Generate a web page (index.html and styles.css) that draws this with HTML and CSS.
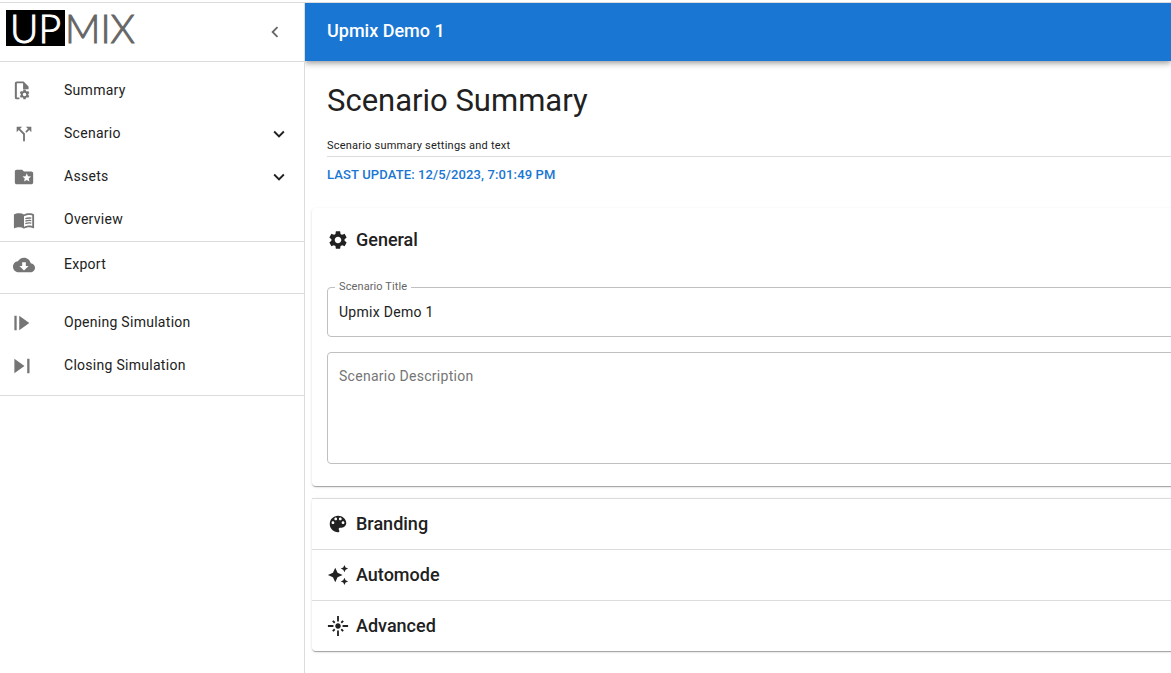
FILE: index.html
```html
<!DOCTYPE html>
<html lang="en">
<head>
<meta charset="utf-8">
<meta name="viewport" content="width=device-width, initial-scale=1">
<title>Upmix Demo 1</title>
<link rel="stylesheet" href="styles.css">
</head>
<body>
<div class="app">
  <aside class="sidebar">
    <div class="brand">
      <a class="logo" href="#" aria-label="Upmix"><span class="logo-up">UP</span><span class="logo-mix">MIX</span></a>
      <button class="collapse" type="button" aria-label="Collapse menu">
        <svg class="icon" viewBox="0 0 24 24"><path d="M15.41 7.41 14 6l-6 6 6 6 1.41-1.41L10.83 12z"/></svg>
      </button>
    </div>
    <nav>
      <div class="group">
        <a class="item" href="#">
          <svg class="icon" viewBox="0 0 24 24"><path d="M4 1.500h7.500l5.500 5.500v3h-6V3.500H4.200v15.500H7v2H4a2 2 0 0 1-2-2V3.500a2 2 0 0 1 2-2z"/><path fill-rule="evenodd" transform="translate(-.6 .8) scale(.88)" d="M13.600 11h2.800l.3 1.700 1.200.7 1.600-.6 1.400 2.400-1.300 1.100v1.400l1.300 1.100-1.400 2.400-1.600-.6-1.200.7-.3 1.700h-2.800l-.3-1.700-1.200-.7-1.600.6-1.400-2.400 1.300-1.100v-1.400l-1.300-1.100 1.400-2.400 1.600.6 1.200-.7zM15 14.800a2.200 2.200 0 1 0 0 4.400 2.200 2.200 0 0 0 0-4.400z"/></svg>
          <span>Summary</span>
        </a>
        <a class="item" href="#">
          <svg class="icon" viewBox="0 0 24 24"><path d="M14 4l2.290 2.290-2.880 2.880 1.420 1.420 2.880-2.880L20 10V4zm-4 0H4v6l2.290-2.290 4.710 4.700V20h2v-8.410l-5.290-5.300z"/></svg>
          <span>Scenario</span>
          <svg class="icon expand" viewBox="0 0 24 24"><path d="M7.410 8.590 12 13.170l4.590-4.580L18 10l-6 6-6-6z"/></svg>
        </a>
        <a class="item" href="#">
          <svg class="icon" viewBox="0 0 24 24"><path d="M20 6h-8l-2-2H4c-1.100 0-2 .9-2 2v12c0 1.100.9 2 2 2h16c1.100 0 2-.9 2-2V8c0-1.100-.9-2-2-2zm-2.060 11L15 15.280 12.060 17l.78-3.330-2.590-2.240 3.410-.29L15 8l1.340 3.140 3.410.29-2.590 2.240z"/></svg>
          <span>Assets</span>
          <svg class="icon expand" viewBox="0 0 24 24"><path d="M7.410 8.590 12 13.170l4.590-4.580L18 10l-6 6-6-6z"/></svg>
        </a>
        <a class="item" href="#">
          <svg class="icon" viewBox="0 0 24 24"><path d="M21 5c-1.110-.35-2.330-.5-3.500-.5-1.950 0-4.050.4-5.500 1.500-1.450-1.100-3.550-1.500-5.500-1.500S2.450 4.900 1 6v14.650c0 .25.25.5.5.5.1 0 .15-.05.25-.05C3.100 20.450 5.050 20 6.500 20c1.950 0 4.050.4 5.500 1.500 1.350-.85 3.800-1.500 5.500-1.500 1.650 0 3.350.3 4.750 1.050.1.05.15.05.25.05.25 0 .5-.25.5-.5V6c-.6-.45-1.250-.75-2-1zm0 13.500c-1.100-.35-2.300-.5-3.500-.5-1.700 0-4.150.65-5.500 1.500V8c1.350-.85 3.800-1.500 5.500-1.500 1.200 0 2.400.15 3.500.5z"/><path fill="none" stroke="currentColor" stroke-width="1.500" d="M13.500 10.600q3.200-1.300 6.500-.6M13.500 13.300q3.200-1.300 6.500-.6M13.500 16q3.200-1.300 6.500-.6"/></svg>
          <span>Overview</span>
        </a>
      </div>
      <div class="group group-export">
        <a class="item" href="#">
          <svg class="icon" viewBox="0 0 24 24"><path d="M19.350 10.040C18.670 6.590 15.640 4 12 4 9.110 4 6.600 5.640 5.350 8.040 2.340 8.360 0 10.910 0 14c0 3.310 2.690 6 6 6h13c2.760 0 5-2.240 5-5 0-2.640-2.050-4.780-4.650-4.960zM17 13l-5 5-5-5h3V9h4v4z"/></svg>
          <span>Export</span>
        </a>
      </div>
      <div class="group group-sim">
        <a class="item" href="#">
          <svg class="icon" viewBox="0 0 24 24"><path d="M1.500 4H4v16H1.500zM6.800 4v16l11-8z"/></svg>
          <span>Opening Simulation</span>
        </a>
        <a class="item" href="#">
          <svg class="icon" viewBox="0 0 24 24"><path d="M1.500 4v16l11-8zM15.500 4H18v16h-2.500z"/></svg>
          <span>Closing Simulation</span>
        </a>
      </div>
    </nav>
  </aside>

  <div class="page">
    <header class="topbar">Upmix Demo 1</header>
    <main class="content">
      <div class="intro">
        <h1>Scenario Summary</h1>
        <p class="caption">Scenario summary settings and text</p>
        <p class="updated">Last update: 12/5/2023, 7:01:49 PM</p>
      </div>

      <section class="card general">
        <h2 class="card-title">
          <svg class="icon" viewBox="0 0 24 24"><path d="M19.140 12.940c.04-.3.06-.61.06-.94 0-.32-.02-.64-.07-.94l2.030-1.580c.18-.14.23-.41.12-.61l-1.920-3.320c-.12-.22-.37-.29-.59-.22l-2.390.96c-.5-.38-1.030-.7-1.620-.94l-.36-2.540c-.04-.24-.24-.41-.48-.41h-3.840c-.24 0-.43.17-.47.41l-.36 2.540c-.59.24-1.130.57-1.620.94l-2.390-.96c-.22-.08-.47 0-.59.22L2.740 8.870c-.12.21-.08.47.12.61l2.030 1.580c-.05.3-.09.63-.09.94s.02.64.07.94l-2.030 1.580c-.18.14-.23.41-.12.61l1.920 3.320c.12.22.37.29.59.22l2.390-.96c.5.38 1.030.7 1.620.94l.36 2.540c.05.24.24.41.48.41h3.840c.24 0 .44-.17.47-.41l.36-2.540c.59-.24 1.130-.56 1.620-.94l2.390.96c.22.08.47 0 .59-.22l1.920-3.320c.12-.22.07-.47-.12-.61zM12 15.600c-1.980 0-3.600-1.620-3.600-3.600s1.620-3.600 3.600-3.600 3.600 1.620 3.600 3.600-1.620 3.600-3.600 3.600z"/></svg>
          General
        </h2>
        <div class="field">
          <label class="field-label" for="title">Scenario Title</label>
          <input class="control" id="title" type="text" value="Upmix Demo 1">
        </div>
        <div class="field">
          <textarea class="control area" id="description" aria-label="Scenario Description" placeholder="Scenario Description"></textarea>
        </div>
      </section>

      <section class="card sections">
        <button class="section" type="button">
          <svg class="icon" viewBox="0 0 24 24"><path d="M12 3C7 3 3 7 3 12s4 9 9 9c.83 0 1.500-.67 1.500-1.500 0-.39-.15-.74-.39-1.010-.23-.26-.38-.61-.38-.99 0-.83.67-1.500 1.500-1.500H16c2.760 0 5-2.240 5-5 0-4.420-4.030-8-9-8zm-5.500 9c-.83 0-1.500-.67-1.500-1.500S5.670 9 6.500 9 8 9.670 8 10.500 7.330 12 6.500 12zm3-4C8.670 8 8 7.330 8 6.500S8.670 5 9.500 5s1.500.67 1.500 1.500S10.330 8 9.500 8zm5 0c-.83 0-1.500-.67-1.500-1.500S13.670 5 14.500 5s1.500.67 1.500 1.500S15.330 8 14.500 8zm3 4c-.83 0-1.500-.67-1.500-1.500S16.670 9 17.500 9s1.500.67 1.500 1.500-.67 1.500-1.500 1.500z"/></svg>
          Branding
        </button>
        <button class="section" type="button">
          <svg class="icon" viewBox="0 0 24 24"><path d="m19 9 1.250-2.750L23 5l-2.750-1.250L19 1l-1.250 2.750L15 5l2.750 1.250zm0 6-1.250 2.750L15 19l2.750 1.250L19 23l1.250-2.750L23 19l-2.750-1.250zm-7.500-5.500L9 4 6.500 9.500 1 12l5.500 2.500L9 20l2.500-5.500L17 12z"/></svg>
          Automode
        </button>
        <button class="section" type="button">
          <svg class="icon" viewBox="0 0 24 24"><path d="M7 11H1v2h6zm2.170-3.240L7.050 5.640 5.640 7.050l2.120 2.120zM13 1h-2v6h2zm5.360 6.050-1.410-1.410-2.120 2.120 1.410 1.410zM17 11v2h6v-2zm-5-2c-1.660 0-3 1.340-3 3s1.340 3 3 3 3-1.340 3-3-1.340-3-3-3zm2.830 7.240 2.120 2.120 1.410-1.410-2.120-2.120zm-9.190.71 1.410 1.410 2.120-2.120-1.410-1.410zM11 23h2v-6h-2z"/></svg>
          Advanced
        </button>
      </section>
    </main>
  </div>
</div>
</body>
</html>
```
FILE: styles.css
```css
* {
  box-sizing: border-box;
}

body {
  margin: 0;
  padding-top: 2px;
  background: #fff;
  color: #212121;
  font-family: Roboto, "Liberation Sans", sans-serif;
  font-size: 14px;
  line-height: 20px;
}

h1, h2, p {
  margin: 0;
}

button {
  border: 0;
  background: none;
  color: inherit;
  font-family: inherit;
  cursor: pointer;
}

.icon {
  width: 22px;
  height: 22px;
  flex: none;
  fill: currentColor;
}

.app {
  display: flex;
  min-height: calc(100vh - 2px);
  border-top: 1px solid #dcdcdc;
}

.sidebar {
  flex: 0 0 305px;
  border-right: 1px solid #dcdcdc;
}

.brand {
  display: flex;
  align-items: center;
  justify-content: space-between;
  height: 59px;
  padding: 0 18px 0 6px;
  border-bottom: 1px solid #dcdcdc;
}

.logo {
  display: flex;
  height: 36px;
  margin-bottom: 8px;
  font-family: Lato, "Open Sans", sans-serif;
  font-size: 39px;
  font-weight: 300;
  line-height: 36px;
  text-decoration: none;
  -webkit-text-stroke: 1px currentColor;
}

.logo-up {
  width: 59px;
  background: #000;
  color: #fff;
  text-align: center;
}

.logo-mix {
  color: #666;
}

.collapse {
  display: flex;
  padding: 0;
  color: #666;
}

.group {
  padding: 6px 0 1px;
  border-bottom: 1px solid #dcdcdc;
}

.group-export {
  padding: 0 0 8px;
}

.group-sim {
  padding-bottom: 9px;
}

.item {
  display: flex;
  align-items: center;
  height: 43px;
  padding: 0 14px 0 13px;
  gap: 29px;
  color: #212121;
  letter-spacing: 0.02em;
  text-decoration: none;
}

.item .icon {
  margin-top: 2px;
  color: #757575;
}

.item .expand {
  margin-left: auto;
  color: #212121;
}

.page {
  flex: 1;
  min-width: 0;
  overflow: hidden;
}

.topbar {
  height: 58px;
  padding: 0 22px;
  background: #1976d2;
  box-shadow: 0 2px 4px -1px rgba(0, 0, 0, 0.2), 0 4px 5px rgba(0, 0, 0, 0.14), 0 1px 9px rgba(0, 0, 0, 0.12);
  color: #fff;
  font-size: 18px;
  font-weight: 500;
  line-height: 56px;
}

/* The content column runs on past the right edge of the window. */
.content {
  margin-right: -24px;
  padding: 21px 0 20px 7px;
}

.intro {
  padding-left: 15px;
}

h1 {
  font-size: 31px;
  font-weight: 400;
  line-height: 38px;
}

.caption {
  margin-top: 15px;
  border-bottom: 1px solid #dcdcdc;
  font-size: 11px;
  letter-spacing: 0.02em;
  line-height: 21px;
}

.updated {
  color: #1976d2;
  font-size: 13px;
  font-weight: 500;
  letter-spacing: 0.01em;
  line-height: 35px;
  text-transform: uppercase;
}

.card {
  border-radius: 4px;
  background: #fff;
  box-shadow: 0 2px 1px -1px rgba(0, 0, 0, 0.2), 0 1px 1px rgba(0, 0, 0, 0.14), 0 1px 3px rgba(0, 0, 0, 0.12);
}

.general {
  margin-top: 16px;
  padding: 20px 15px 22px;
}

.card-title,
.section {
  display: flex;
  align-items: center;
  gap: 7px;
  font-size: 18px;
  font-weight: 500;
  line-height: 24px;
}

.field {
  position: relative;
  margin-top: 15px;
}

.card-title + .field {
  margin-top: 35px;
}

.field-label {
  position: absolute;
  top: -9px;
  left: 8px;
  padding: 0 4px;
  background: #fff;
  color: #666;
  font-size: 11px;
  letter-spacing: 0.01em;
  line-height: 18px;
}

.control {
  display: block;
  width: 100%;
  height: 50px;
  padding: 0 11px;
  border: 1px solid #c0c0c0;
  border-radius: 4px;
  background: none;
  color: #212121;
  font-family: inherit;
  font-size: 14px;
  letter-spacing: 0.02em;
  line-height: 20px;
}

.area {
  height: 112px;
  padding: 13px 11px;
  resize: none;
}

.control::placeholder {
  color: #757575;
}

.sections {
  margin-top: 12px;
}

.section {
  width: 100%;
  padding: 13px 15px;
  border-top: 1px solid #dcdcdc;
}
```
